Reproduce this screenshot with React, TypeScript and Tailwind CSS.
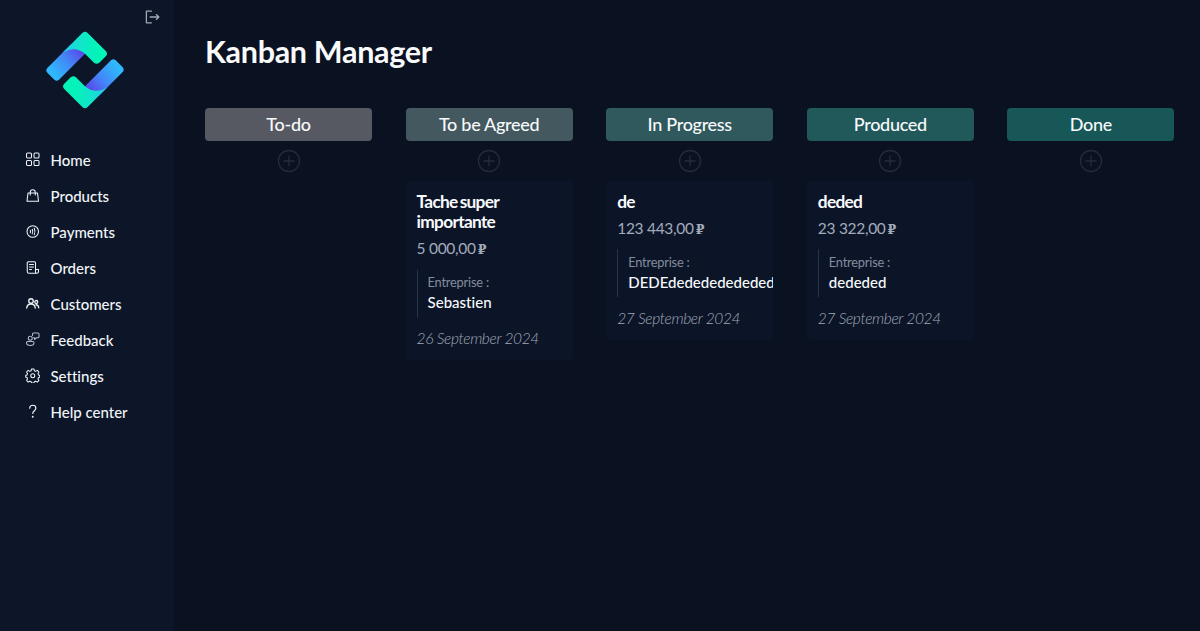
import type { ReactNode } from 'react';

type IconProps = { children: ReactNode; size?: string };

function Icon({ children, size = 'size-[15px]' }: IconProps) {
  return (
    <svg
      viewBox="0 0 30 30"
      className={`${size} shrink-0`}
      fill="none"
      stroke="currentColor"
      strokeWidth="2.100"
      strokeLinecap="round"
      strokeLinejoin="round"
    >
      {children}
    </svg>
  );
}

const nav: { label: string; icon: ReactNode }[] = [
  {
    label: 'Home',
    icon: (
      <>
        <rect x="3" y="2" width="10" height="10" rx="2.2" />
        <rect x="18" y="2" width="10" height="10" rx="2.2" />
        <rect x="3" y="17" width="10" height="10" rx="2.2" />
        <rect x="18" y="17" width="10" height="10" rx="2.2" />
      </>
    ),
  },
  {
    label: 'Products',
    icon: (
      <>
        <path d="M6 10h19l2 16.500H4z" />
        <path d="M10.500 14V8.500a5 5 0 0 1 10 0V14" />
      </>
    ),
  },
  {
    label: 'Payments',
    icon: (
      <>
        <circle cx="15.500" cy="15" r="11.500" />
        <path d="M10.500 12.500q1.200 2.500 0 5M14.500 10.500q2 4.500 0 9M18.500 8.500q3 6.500 0 13" />
      </>
    ),
  },
  {
    label: 'Orders',
    icon: (
      <>
        <path d="M21 18V5.500a2 2 0 0 0-2-2H6.500a2 2 0 0 0-2 2V23a3.500 3.500 0 0 0 3.500 3.500h15.500a3.500 3.500 0 0 0 3.500-3.500v-4h-6V24a2.500 2.500 0 0 0 2.500 2.500" />
        <path d="M9 9h8M9 14h8M9 19h4" />
      </>
    ),
  },
  {
    label: 'Customers',
    icon: (
      <g strokeWidth="2.600">
        <circle cx="12" cy="10" r="4.500" />
        <path d="M3.500 24c.500-5 4-8 8.500-8s8 3 8.500 8" />
        <circle cx="22.500" cy="12" r="3" />
        <path d="M22 17.500c3 0 5 2.500 5.500 6" />
      </g>
    ),
  },
  {
    label: 'Feedback',
    icon: (
      <g stroke="#b4bccb">
        <circle cx="10.500" cy="12.500" r="4" />
        <path d="M5.500 19h10a2.500 2.500 0 0 1 2.500 2.500c0 3.500-3 5.500-7.500 5.500s-7.500-2-7.500-5.500A2.500 2.500 0 0 1 5.500 19z" />
        <path d="M15 7V4a2 2 0 0 1 2-2h9a2 2 0 0 1 2 2v5.500a2 2 0 0 1-2 2h-3L19 15v-3.500h-2" />
      </g>
    ),
  },
  {
    label: 'Settings',
    icon: (
      <>
        <path d="M13.200 2h4.600l1 3.700 2.500 1 3.300-1.900 3.200 3.200-1.900 3.300 1 2.500 2.600.900v3.600l-2.600.900-1 2.500 1.900 3.300-3.200 3.200-3.300-1.900-2.500 1-1 2.700h-4.600l-1-2.700-2.500-1-3.300 1.900L3.200 25l1.900-3.300-1-2.500-2.600-.900v-3.600l2.600-.900 1-2.500L3.200 8l3.200-3.200 3.300 1.900 2.500-1z" />
        <circle cx="15.500" cy="15.500" r="4" />
      </>
    ),
  },
  {
    label: 'Help center',
    icon: (
      <g strokeWidth="2.300">
        <path d="M9.500 8.500C9.500 5 12 2.500 15.500 2.500s6.200 2.300 6.200 5.800c0 5.200-6.200 5.200-6.200 10.700" />
        <circle cx="15.500" cy="25.500" r=".8" fill="currentColor" />
      </g>
    ),
  },
];

type Task = { title: string; price: string; company: string; date: string };

const columns: { name: string; color: string; tasks: Task[] }[] = [
  { name: 'To-do', color: 'bg-[#565962]', tasks: [] },
  {
    name: 'To be Agreed',
    color: 'bg-[#43595f]',
    tasks: [{ title: 'Tache super importante', price: '5 000,00', company: 'Sebastien', date: '26 September 2024' }],
  },
  {
    name: 'In Progress',
    color: 'bg-[#30595d]',
    tasks: [{ title: 'de', price: '123 443,00', company: 'DEDEdedededededed', date: '27 September 2024' }],
  },
  {
    name: 'Produced',
    color: 'bg-[#215859]',
    tasks: [{ title: 'deded', price: '23 322,00', company: 'dededed', date: '27 September 2024' }],
  },
  { name: 'Done', color: 'bg-[#175757]', tasks: [] },
];

function Logo() {
  return (
    <svg viewBox="0 0 234 234" className="size-[78px]">
      <defs>
        <linearGradient id="band" x1="20" y1="125" x2="105" y2="55" gradientUnits="userSpaceOnUse">
          <stop offset="0" stopColor="#2fb8fb" />
          <stop offset=".5" stopColor="#4289f8" />
          <stop offset="1" stopColor="#5b45e8" />
        </linearGradient>
        <linearGradient id="corner" x1="50" y1="60" x2="150" y2="60" gradientUnits="userSpaceOnUse">
          <stop offset="0" stopColor="#20cdec" />
          <stop offset=".5" stopColor="#12e4cb" />
          <stop offset="1" stopColor="#04f3b8" />
        </linearGradient>
        <g id="half">
          <path
            d="M4 111Q-2 118 4 125L25 146Q32 152 39 146L117 68L117 40L75 40Z"
            fill="url(#band)"
          />
          <path
            d="M49 66L109 6Q117-2 125 6L180 61Q186 68 180 75L160 95Q152 101 144 95L117 68Q86 42 49 66Z"
            fill="url(#corner)"
          />
        </g>
      </defs>
      <use href="#half" />
      <use href="#half" transform="rotate(180 117 117)" />
    </svg>
  );
}

function TaskCard({ task }: { task: Task }) {
  return (
    <article className="overflow-hidden rounded-[4px] bg-[#0c1528] px-[11px] pt-[10.500px] pb-[11px]">
      <h2 className="text-[17.300px] leading-[20.500px] font-bold tracking-[-0.7px] text-slate-50 [word-spacing:-1.500px]">
        {task.title}
      </h2>
      <p className="mt-[4.500px] text-[15.500px] leading-[22px] tracking-[-0.3px] text-[#a3abba]">
        {task.price}
        <span className="ml-[2px] font-['DejaVu_Serif',serif] text-[12.500px] leading-none font-bold">₽</span>
      </p>
      <div className="mt-[10.500px] border-l border-[#2a3344] pt-[2.500px] pb-[4.500px] pl-[10px]">
        <p className="text-[12.800px] leading-[20px] tracking-[-0.200px] text-[#848d9d]">Entreprise :</p>
        <p className="text-[15px] leading-[21px] font-medium whitespace-nowrap text-slate-50">{task.company}</p>
      </div>
      <p className="mt-[9.500px] text-[15.500px] leading-[22px] font-light tracking-[-0.360px] text-[#a0a8b7] italic">
        {task.date}
      </p>
    </article>
  );
}

export default function App() {
  return (
    <div className="flex h-[631px] w-[1200px] overflow-hidden bg-[#0a1120] font-[Lato,sans-serif] text-slate-50 [font-variant-ligatures:none]">
      <aside className="flex w-[174px] shrink-0 flex-col bg-[#0d1628]">
        <div className="flex h-[31px] justify-end pt-[9px] pr-[14px] text-[#a0a7b5]">
          <Icon size="size-[16px]">
            <path d="M14 4H4.500v22H14M11.500 15H28M23 10.500l5 4.500-5 4.500" strokeWidth="2.400" />
          </Icon>
        </div>
        <div className="pl-[46px]">
          <Logo />
        </div>
        <nav className="mt-[33px] flex flex-col pl-[25px]">
          {nav.map((item) => (
            <a key={item.label} className="flex h-9 items-center gap-[10.500px] text-[15px] font-medium text-slate-100">
              <span className="-mt-px">
                <Icon>{item.icon}</Icon>
              </span>
              {item.label}
            </a>
          ))}
        </nav>
      </aside>
      <main className="flex-1 pr-[25.500px] pl-[31px]">
        <h1 className="mt-[31px] text-[30.500px] leading-[40px] font-bold tracking-[-0.3px]">Kanban Manager</h1>
        <div className="mt-[37px] grid grid-cols-5 items-start gap-[33.600px]">
          {columns.map((column) => (
            <section key={column.name} className="flex min-w-0 flex-col">
              <header
                className={`${column.color} flex h-[33px] items-center justify-center rounded-[4px] text-[18px] font-medium tracking-[-0.3px]`}
              >
                {column.name}
              </header>
              <button className="mt-[7.500px] mb-[8.500px] flex justify-center text-[#242b39]">
                <svg viewBox="0 0 24 24" className="size-6" fill="none" stroke="currentColor" strokeWidth="1.300">
                  <circle cx="12" cy="12" r="10.500" />
                  <path d="M12 6.500v11M6.500 12h11" />
                </svg>
              </button>
              {column.tasks.map((task) => (
                <TaskCard key={task.title} task={task} />
              ))}
            </section>
          ))}
        </div>
      </main>
    </div>
  );
}
